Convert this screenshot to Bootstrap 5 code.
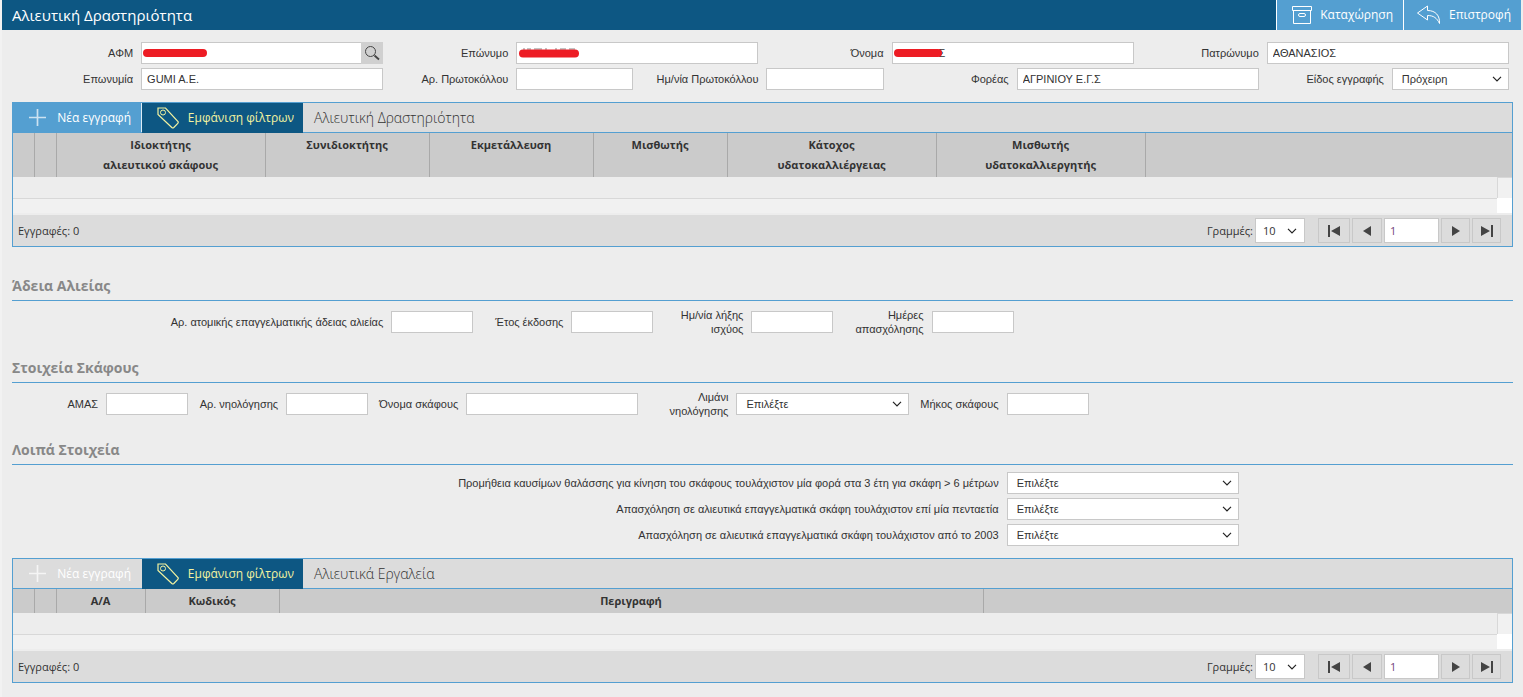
<!DOCTYPE html>
<html lang="el">
<head>
<meta charset="utf-8">
<meta name="viewport" content="width=device-width, initial-scale=1">
<title>Αλιευτική Δραστηριότητα</title>
<link href="https://cdn.jsdelivr.net/npm/bootstrap@5.3.0/dist/css/bootstrap.min.css" rel="stylesheet">
<style>
:root { --navy: #0d5783; --sky: #549fd1; --page: #ededed; --line: #c8c8c8; }
body { background: var(--page); color: #333; font: 11px/14px "Liberation Sans", Arial, sans-serif; border-left: 2px solid #f2f2f2; }
.ui-font, .ui-font .btn { font-family: "Open Sans", "Noto Sans", sans-serif; }
svg { display: block; fill: none; flex: none; }
.btn { border: 0; border-radius: 0; font-size: 12px; line-height: 16px; padding: 0; }

.topbar { background: var(--navy); color: #fff; height: 30px; margin-right: 2px; }
.topbar h1 { font-size: 15px; line-height: 30px; padding-left: 10px; }
.topbar .btn { background: var(--sky); color: #fff; border-left: 1px solid #fff; }
.btn-save { width: 127px; padding: 0 10px 0 14px; }
.btn-back { width: 118px; padding: 0 10px 0 12px; }

.page-body { padding: 10px 10px 14px; }
.form-line { min-height: 26px; }
.form-line > * { padding: 0 4px; }
.form-line label { text-align: right; }
.form-control, .form-select { height: 22px; min-height: 22px; border: 1px solid var(--line); border-radius: 0; background-color: #fff; color: #333; font-size: 11px; line-height: 14px; padding: 0 5px; }
.form-select { padding: 0 24px 0 9px; background-image: url("data:image/svg+xml,%3Csvg xmlns='http://www.w3.org/2000/svg' viewBox='0 0 10 6'%3E%3Cpath d='M1 .8l4 4 4-4' fill='none' stroke='%23222' stroke-width='1.2'/%3E%3C/svg%3E"); background-size: 10px 6px; background-position: right 6px center; }
.lookup { flex: 0 0 22px; height: 22px; background: #d0d0d0; }
.redaction { position: absolute; left: 2px; top: 6px; }
.after-redaction { padding-left: 46px; }
.cell-6 { flex: 0 0 6%; }
.cell-12 { flex: 0 0 12%; }
.cell-16 { flex: 0 0 16%; }
.cell-25 { flex: 0 0 25%; }
.cell-66 { flex: 0 0 66%; }

.section-title { font-family: "Open Sans", "Noto Sans", sans-serif; font-size: 14px; font-weight: 700; line-height: 29px; color: #888; border-bottom: 1px solid var(--sky); margin: 0; }
.section-body { padding: 6px 0 16px; }
.section-body .form-line { min-height: 30px; }
.section-list { padding: 5px 0 10px; }
.first-section { margin-top: 24px; }

.grid-panel { border: 1px solid var(--sky); background: #dcdcdc; }
.panel-one { margin-top: 10px; }
.panel-bar { height: 30px; border-bottom: 1px solid var(--sky); }
.btn-new { width: 129px; background: var(--sky); color: #fff; padding: 0 10px 0 16px; border-right: 1px solid #dcecf6; }
.btn-new:disabled { background: #dcdcdc; color: #fff; opacity: 1; border-color: #dcdcdc; }
.btn-filter, .btn-filter:hover { width: 161px; height: 30px; background: var(--navy); color: #f3f3a0; padding: 0 9px 0 15px; }
.panel-name { font-size: 14px; font-weight: 300; line-height: 29px; margin: 0; padding-left: 11px; color: #333; }
.data-grid { width: 100%; table-layout: fixed; font-size: 11px; line-height: 20px; }
.data-grid th { background: #cbcbcb; border-right: 1px solid #a9a9a9; padding: 2px 8px; text-align: center; vertical-align: top; font-weight: 700; color: #333; height: 24px; }
.data-grid th:last-child { border-right: 0; }
.rows-area { background: #f1f1f1; height: 38px; border-bottom: 2px solid var(--page); }
.rows-empty { background: var(--page); border-bottom: 1px solid #d8d8d8; height: 22px; }
.scroll-gutter { width: 15px; background: #fff; }
.scroll-gutter span { display: block; height: 21px; background: #f1f1f1; border: solid #d8d8d8; border-width: 1px 0 0 1px; }
.panel-foot { height: 31px; padding: 0 11px 0 5px; gap: 2px; }
.panel-foot .form-select { width: 50px; height: 25px; padding: 0 7px; background-position: right 7px center; margin-right: 11px; }
.panel-foot .form-control { width: 55px; height: 25px; color: #73437a; }
.pager-btn { height: 25px; width: 29px; border: 1px solid var(--line); }
.pager-prev { width: 30px; }
.pager-first { width: 32px; }
</style>
</head>
<body>
<svg width="0" height="0" class="position-absolute" aria-hidden="true">
  <symbol id="i-plus" viewBox="0 0 16 16"><path d="M8 0v16M0 8h16" stroke="currentColor" stroke-width="1.6" opacity=".7"/></symbol>
  <symbol id="i-tag" viewBox="0 0 22 22"><path d="M1 1h7.500L21 14.500q.6 1-.2 1.800l-4 4.200q-1 .8-2 0L1 7.500z" stroke="currentColor" stroke-width="1.200"/><circle cx="6" cy="5.500" r="2.500" stroke="currentColor"/></symbol>
  <symbol id="i-first" viewBox="0 0 12 12"><path d="M0 0h2v12H0zM12 1v10L3 6z" fill="#444"/></symbol>
  <symbol id="i-prev" viewBox="0 0 12 12"><path d="M10 1v10L2 6z" fill="#444"/></symbol>
  <symbol id="i-next" viewBox="0 0 12 12"><path d="M2 1v10l8-5z" fill="#444"/></symbol>
  <symbol id="i-last" viewBox="0 0 12 12"><path d="M10 0h2v12h-2zM0 1v10l9-5z" fill="#444"/></symbol>
</svg>

<header class="topbar ui-font d-flex">
  <h1 class="m-0 flex-grow-1 fw-normal">Αλιευτική Δραστηριότητα</h1>
  <button type="button" class="btn btn-save d-flex align-items-center justify-content-between">
    <svg width="22" height="20" viewBox="0 0 22 20" stroke="#fff"><path d="M1.500 1.500h19v4h-19zM2.500 5.500v13h17v-13"/><rect x="7.500" y="8.500" width="7" height="3" rx="1.500"/></svg>Καταχώρηση</button>
  <button type="button" class="btn btn-back d-flex align-items-center justify-content-between">
    <svg width="26" height="20" viewBox="0 0 26 20" stroke="#fff"><path d="M11.500 1L1.500 8l10 7v-4.500c6 0 9.500 2.500 12 8 .5-8-4-13-12-13z"/></svg>Επιστροφή</button>
</header>

<main class="page-body">
  <form>
    <div class="row g-0 form-line align-items-center">
      <label class="col-1" for="afm">ΑΦΜ</label>
      <div class="col-2"><div class="d-flex position-relative"><input id="afm" class="form-control border-end-0"><button type="button" class="btn lookup d-flex align-items-center justify-content-center" aria-label="Αναζήτηση"><svg width="16" height="16" viewBox="0 0 16 16" stroke="#444"><circle cx="6.500" cy="6.500" r="5"/><path d="M10.500 10.500l4.500 4" stroke-width="1.800"/></svg></button>
        <svg class="redaction" width="66" height="10"><path d="M4 5h56" stroke="#ed1c24" stroke-width="8" stroke-linecap="round"/></svg></div></div>
      <label class="col-1" for="surname">Επώνυμο</label>
      <div class="col-2"><div class="position-relative"><input id="surname" class="form-control">
        <svg class="redaction" width="66" height="10"><path d="M5 1h2M9 1h4M16 1h8M27 1h2M37 1h2M42 1h6M51 1h6" stroke="#888"/><path d="M5 5.500h52" stroke="#ed1c24" stroke-width="8" stroke-linecap="round"/></svg></div></div>
      <label class="col-1" for="name">Όνομα</label>
      <div class="col-2"><div class="position-relative"><input id="name" class="form-control after-redaction" value="Σ">
        <svg class="redaction" width="52" height="10"><path d="M4 5h40" stroke="#ed1c24" stroke-width="8" stroke-linecap="round"/></svg></div></div>
      <label class="col-1" for="father">Πατρώνυμο</label>
      <div class="col-2"><input id="father" class="form-control" value="ΑΘΑΝΑΣΙΟΣ"></div>
    </div>
    <div class="row g-0 form-line align-items-center">
      <label class="col-1" for="company">Επωνυμία</label>
      <div class="col-2"><input id="company" class="form-control" value="GUMI A.E."></div>
      <label class="col-1" for="protocol">Αρ. Πρωτοκόλλου</label>
      <div class="col-1"><input id="protocol" class="form-control"></div>
      <label class="col-1" for="protdate">Ημ/νία Πρωτοκόλλου</label>
      <div class="col-1"><input id="protdate" class="form-control"></div>
      <label class="col-1" for="agency">Φορέας</label>
      <div class="col-2"><input id="agency" class="form-control" value="ΑΓΡΙΝΙΟΥ Ε.Γ.Σ"></div>
      <label class="col-1" for="kind">Είδος εγγραφής</label>
      <div class="col-1"><select id="kind" class="form-select"><option>Πρόχειρη</option></select></div>
    </div>
  </form>

  <section class="grid-panel panel-one ui-font">
    <div class="panel-bar d-flex">
      <button type="button" class="btn btn-new d-flex align-items-center justify-content-between"><svg width="17" height="17"><use href="#i-plus"/></svg>Νέα εγγραφή</button>
      <button type="button" class="btn btn-filter d-flex align-items-center justify-content-between"><svg width="22" height="22"><use href="#i-tag"/></svg>Εμφάνιση φίλτρων</button>
      <h2 class="panel-name">Αλιευτική Δραστηριότητα</h2>
    </div>
    <table class="data-grid">
      <colgroup><col width="21"><col width="22"><col width="209"><col width="164"><col width="164"><col width="134"><col width="209"><col width="209"><col></colgroup>
      <thead><tr><th></th><th></th><th>Ιδιοκτήτης<br>αλιευτικού σκάφους</th><th>Συνιδιοκτήτης</th><th>Εκμετάλλευση</th><th>Μισθωτής</th><th>Κάτοχος<br>υδατοκαλλιέργειας</th><th>Μισθωτής<br>υδατοκαλλιεργητής</th><th></th></tr></thead>
    </table>
    <div class="rows-area d-flex"><div class="rows-empty flex-grow-1"></div><div class="scroll-gutter"><span></span></div></div>
    <div class="panel-foot d-flex align-items-center">
      <span class="me-auto">Εγγραφές: 0</span>
      <label for="rows1">Γραμμές:</label>
      <select id="rows1" class="form-select"><option>10</option></select>
      <button type="button" class="btn pager-btn pager-first d-flex align-items-center justify-content-center" aria-label="Πρώτη"><svg width="12" height="12"><use href="#i-first"/></svg></button>
      <button type="button" class="btn pager-btn pager-prev d-flex align-items-center justify-content-center" aria-label="Προηγούμενη"><svg width="12" height="12"><use href="#i-prev"/></svg></button>
      <input class="form-control" value="1" aria-label="Σελίδα">
      <button type="button" class="btn pager-btn d-flex align-items-center justify-content-center" aria-label="Επόμενη"><svg width="12" height="12"><use href="#i-next"/></svg></button>
      <button type="button" class="btn pager-btn d-flex align-items-center justify-content-center" aria-label="Τελευταία"><svg width="12" height="12"><use href="#i-last"/></svg></button>
    </div>
  </section>

  <section class="first-section">
    <h2 class="section-title">Άδεια Αλιείας</h2>
    <div class="section-body"><div class="form-line d-flex align-items-center">
      <label class="cell-25" for="licence">Αρ. ατομικής επαγγελματικής άδειας αλιείας</label>
      <div class="cell-6"><input id="licence" class="form-control"></div>
      <label class="cell-6 text-nowrap" for="year">Έτος έκδοσης</label>
      <div class="cell-6"><input id="year" class="form-control"></div>
      <label class="cell-6" for="expiry">Ημ/νία λήξης<br>ισχύος</label>
      <div class="cell-6"><input id="expiry" class="form-control"></div>
      <label class="cell-6" for="days">Ημέρες<br>απασχόλησης</label>
      <div class="cell-6"><input id="days" class="form-control"></div>
    </div></div>
  </section>

  <section>
    <h2 class="section-title">Στοιχεία Σκάφους</h2>
    <div class="section-body"><div class="form-line d-flex align-items-center">
      <label class="cell-6" for="amas">ΑΜΑΣ</label>
      <div class="cell-6"><input id="amas" class="form-control"></div>
      <label class="cell-6 text-nowrap" for="registry">Αρ. νηολόγησης</label>
      <div class="cell-6"><input id="registry" class="form-control"></div>
      <label class="cell-6 text-nowrap" for="vessel">Όνομα σκάφους</label>
      <div class="cell-12"><input id="vessel" class="form-control"></div>
      <label class="cell-6" for="port">Λιμάνι<br>νηολόγησης</label>
      <div class="cell-12"><select id="port" class="form-select"><option>Επιλέξτε</option></select></div>
      <label class="cell-6 text-nowrap" for="length">Μήκος σκάφους</label>
      <div class="cell-6"><input id="length" class="form-control"></div>
    </div></div>
  </section>

  <section>
    <h2 class="section-title">Λοιπά Στοιχεία</h2>
    <div class="section-list">
      <div class="form-line d-flex align-items-center">
        <label class="cell-66" for="fuel">Προμήθεια καυσίμων θαλάσσης για κίνηση του σκάφους τουλάχιστον μία φορά στα 3 έτη για σκάφη &gt; 6 μέτρων</label>
        <div class="cell-16"><select id="fuel" class="form-select"><option>Επιλέξτε</option></select></div>
      </div>
      <div class="form-line d-flex align-items-center">
        <label class="cell-66" for="five">Απασχόληση σε αλιευτικά επαγγελματικά σκάφη τουλάχιστον επί μία πενταετία</label>
        <div class="cell-16"><select id="five" class="form-select"><option>Επιλέξτε</option></select></div>
      </div>
      <div class="form-line d-flex align-items-center">
        <label class="cell-66" for="since">Απασχόληση σε αλιευτικά επαγγελματικά σκάφη τουλάχιστον από το 2003</label>
        <div class="cell-16"><select id="since" class="form-select"><option>Επιλέξτε</option></select></div>
      </div>
    </div>
  </section>

  <section class="grid-panel ui-font">
    <div class="panel-bar d-flex">
      <button type="button" disabled class="btn btn-new d-flex align-items-center justify-content-between"><svg width="17" height="17"><use href="#i-plus"/></svg>Νέα εγγραφή</button>
      <button type="button" class="btn btn-filter d-flex align-items-center justify-content-between"><svg width="22" height="22"><use href="#i-tag"/></svg>Εμφάνιση φίλτρων</button>
      <h2 class="panel-name">Αλιευτικά Εργαλεία</h2>
    </div>
    <table class="data-grid">
      <colgroup><col width="21"><col width="22"><col width="89"><col width="134"><col width="704"><col></colgroup>
      <thead><tr><th></th><th></th><th>Α/Α</th><th>Κωδικός</th><th>Περιγραφή</th><th></th></tr></thead>
    </table>
    <div class="rows-area d-flex"><div class="rows-empty flex-grow-1"></div><div class="scroll-gutter"><span></span></div></div>
    <div class="panel-foot d-flex align-items-center">
      <span class="me-auto">Εγγραφές: 0</span>
      <label for="rows2">Γραμμές:</label>
      <select id="rows2" class="form-select"><option>10</option></select>
      <button type="button" class="btn pager-btn pager-first d-flex align-items-center justify-content-center" aria-label="Πρώτη"><svg width="12" height="12"><use href="#i-first"/></svg></button>
      <button type="button" class="btn pager-btn pager-prev d-flex align-items-center justify-content-center" aria-label="Προηγούμενη"><svg width="12" height="12"><use href="#i-prev"/></svg></button>
      <input class="form-control" value="1" aria-label="Σελίδα">
      <button type="button" class="btn pager-btn d-flex align-items-center justify-content-center" aria-label="Επόμενη"><svg width="12" height="12"><use href="#i-next"/></svg></button>
      <button type="button" class="btn pager-btn d-flex align-items-center justify-content-center" aria-label="Τελευταία"><svg width="12" height="12"><use href="#i-last"/></svg></button>
    </div>
  </section>
</main>
<script src="https://cdn.jsdelivr.net/npm/bootstrap@5.3.0/dist/js/bootstrap.bundle.min.js"></script>
</body>
</html>
